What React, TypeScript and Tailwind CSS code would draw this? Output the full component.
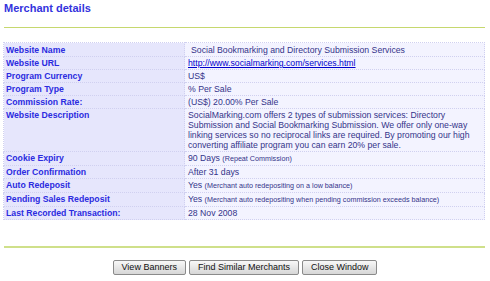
const rows: { label: string; value: React.ReactNode; extra?: string }[] = [
  { label: "Website Name", value: "Social Bookmarking and Directory Submission Services", extra: "pl-[6px]" },
  {
    label: "Website URL",
    value: (
      <a href="#" className="text-[#0000cc] underline">
        http://www.socialmarking.com/services.html
      </a>
    ),
  },
  { label: "Program Currency", value: "US$" },
  { label: "Program Type", value: "% Per Sale" },
  { label: "Commission Rate:", value: "(US$) 20.00% Per Sale" },
  {
    label: "Website Description",
    value:
      "SocialMarking.com offers 2 types of submission services: Directory Submission and Social Bookmarking Submission. We offer only one-way linking services so no reciprocal links are required. By promoting our high converting affiliate program you can earn 20% per sale.",
  },
  {
    label: "Cookie Expiry",
    value: (
      <>
        90 Days <span className="text-[7.2px]">(Repeat Commission)</span>
      </>
    ),
  },
  { label: "Order Confirmation", value: "After 31 days" },
  {
    label: "Auto Redeposit",
    value: (
      <>
        Yes <span className="text-[7.2px]">(Merchant auto redepositing on a low balance)</span>
      </>
    ),
  },
  {
    label: "Pending Sales Redeposit",
    value: (
      <>
        Yes{" "}
        <span className="text-[7.2px]">
          (Merchant auto redepositing when pending commission exceeds balance)
        </span>
      </>
    ),
  },
  { label: "Last Recorded Transaction:", value: "28 Nov 2008" },
];

function Button({ children }: { children: React.ReactNode }) {
  return (
    <button className="h-[15px] px-[8px] rounded-[2px] border border-[#8a8a8a] bg-gradient-to-b from-[#f8f8f8] to-[#d6d6d6] text-[9px] leading-[13px] text-[#111]">
      {children}
    </button>
  );
}

export default function App() {
  return (
    <div className="w-[490px] h-[281px] bg-white font-['Liberation_Sans',Arial,sans-serif] overflow-hidden">
      <div className="pt-[2px] pl-[4px] text-[11px] leading-[13px] font-bold text-[#3333dd]">
        Merchant details
      </div>
      <div className="mt-[12px] ml-[4px] w-[481px] h-[1px] bg-[#c6d86e]" />
      <table className="mt-[14px] ml-[3px] w-[482px] border-collapse text-[8.7px] leading-[10px]">
        <tbody>
          {rows.map((r, i) => (
            <tr key={r.label}>
              <td
                className={`w-[181px] bg-[#e6e6fc] border border-dotted border-[#d0d0f0] px-[2px] align-top font-bold text-[#2b2be0] ${
                  i === 0 ? "pt-[2px] pb-[1px]" : "py-px"
                }`}
              >
                {r.label}
              </td>
              <td
                className={`bg-[#f3f3ff] border border-dotted border-[#d0d0f0] pl-[3px] pr-[4px] align-top text-[#33338a] ${
                  i === 0 ? "pt-[2px] pb-[1px]" : "py-px"
                } ${r.extra ?? ""}`}
              >
                {r.value}
              </td>
            </tr>
          ))}
        </tbody>
      </table>
      <div className="mt-[26px] ml-[4px] w-[481px] h-[2px] bg-[#cfe08a]" />
      <div className="mt-[12px] flex justify-center gap-[3px]">
        <Button>View Banners</Button>
        <Button>Find Similar Merchants</Button>
        <Button>Close Window</Button>
      </div>
    </div>
  );
}
